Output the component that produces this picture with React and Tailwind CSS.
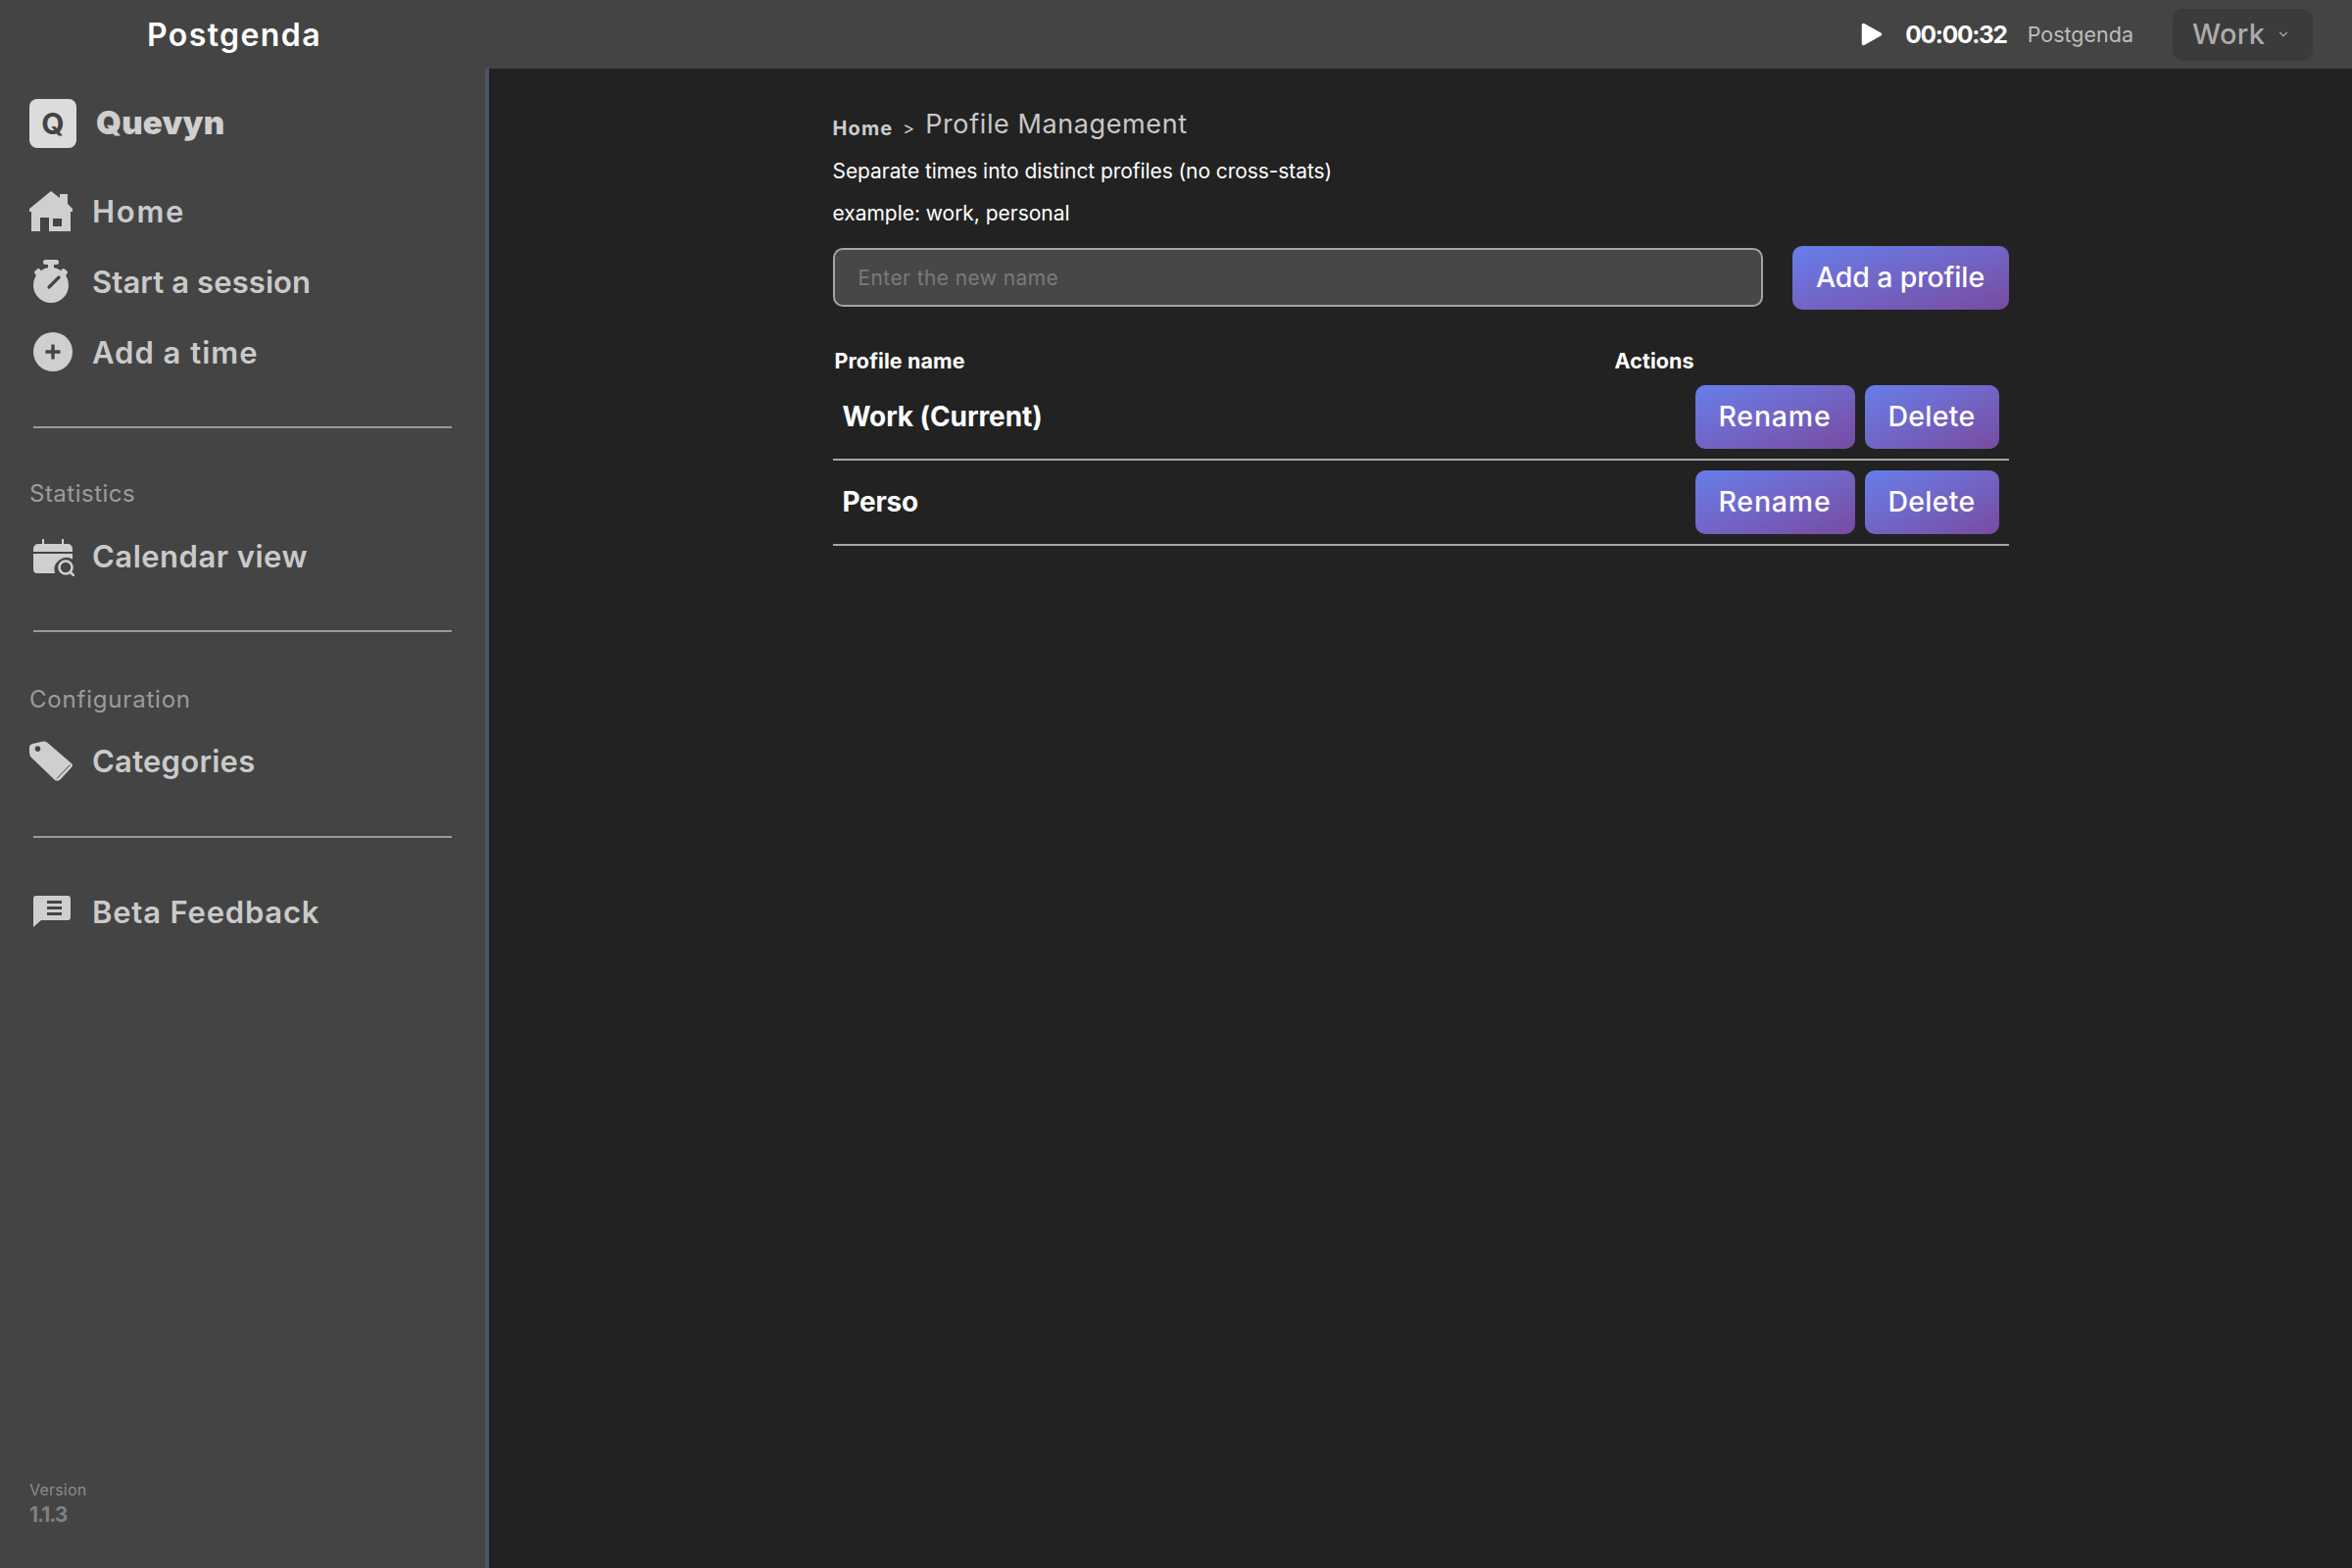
import React from "react";
import { LuChevronDown } from "react-icons/lu";

const HomeIcon = () => (
  <svg viewBox="0 0 44 41" className="w-[44px] h-[41px]" fill="#cfcfcf">
    <path fillRule="evenodd" d="M22 0l9 7V3h8v10l5 5v3h-2v20H20V27h-9v14H2V21H0v-3zM24 28v8h9v-8z" />
  </svg>
);

const StopwatchIcon = () => (
  <svg viewBox="0 0 36 44" className="w-[36px] h-[44px] ml-[4px]" fill="#cfcfcf">
    <rect x="10" y="0" width="16" height="5" rx="2.5" />
    <rect x="15" y="4" width="6" height="7" />
    <rect x="1" y="10" width="7" height="5" rx="2" transform="rotate(-40 4.5 12.5)" />
    <rect x="28" y="10" width="7" height="5" rx="2" transform="rotate(40 31.5 12.5)" />
    <circle cx="18" cy="26" r="18" />
    <path d="M16 28L26 18" stroke="#444444" strokeWidth="3.2" strokeLinecap="round" />
  </svg>
);

const PlusCircleIcon = () => (
  <svg viewBox="0 0 40 40" className="w-[40px] h-[40px] ml-[4px]">
    <circle cx="20" cy="20" r="20" fill="#cfcfcf" />
    <path d="M20 12.5v15M12.5 20h15" stroke="#444444" strokeWidth="3.4" />
  </svg>
);

const CalendarSearch = () => (
  <svg viewBox="0 0 42 38" className="w-[42px] h-[38px] ml-[4px] mt-[3px]" fill="#cfcfcf">
    <path d="M9 0h2v5h18V0h2v5h4a5 5 0 0 1 5 5v3H0v-3a5 5 0 0 1 5-5h4z" />
    <path d="M0 15h40v5.5A12.5 12.5 0 0 0 22 35H4a4 4 0 0 1-4-4z" />
    <circle cx="33" cy="29" r="6.5" fill="none" stroke="#cfcfcf" strokeWidth="2.6" />
    <path d="M37.5 33.5L42 38" stroke="#cfcfcf" strokeWidth="2.6" />
  </svg>
);

const TagIcon = () => (
  <svg viewBox="0 0 45 42" className="w-[45px] h-[42px] mt-[2px]" fill="#cfcfcf">
    <path d="M3 3L14 .5Q16 0 18 1.5L43 23Q45 25 43 27L32 39Q29 42 26 40L2 17Q0 15 0 12V6Q0 4 3 3z" />
    <circle cx="8.5" cy="8" r="2.8" fill="#444444" />
    <path d="M41.5 24.5L28 38.5" stroke="#444444" strokeWidth="1" fill="none" />
  </svg>
);

const ChatIcon = () => (
  <svg viewBox="0 0 38 32" className="w-[38px] h-[32px] ml-[4px]" fill="#cfcfcf">
    <path d="M3 0h32a3 3 0 0 1 3 3v19a3 3 0 0 1-3 3H8l-8 7V3a3 3 0 0 1 3-3z" />
    <path d="M14 5h15v3H14zM14 11h15v3H14zM14 17h15v3H14z" fill="#444444" />
  </svg>
);

const PlayIcon = () => (
  <svg viewBox="0 0 22 24" className="w-[22px] h-[24px]" fill="#ffffff" stroke="#ffffff" strokeWidth="3.5" strokeLinejoin="round">
    <path d="M2.5 2.5L19.5 12L2.5 21.5z" />
  </svg>
);

function NavItem({ icon, label, className }) {
  return (
    <div className="flex items-center h-[72px] text-[#cacaca]">
      <div className="w-[94px] pl-[30px] flex items-center shrink-0">{icon}</div>
      <span className={"text-[31px] font-semibold leading-none " + className}>{label}</span>
    </div>
  );
}

function Divider() {
  return <div className="h-[2px] bg-[#9a9a9a] ml-[34px] w-[427px]" />;
}

function GradientButton({ children, className }) {
  return (
    <button className={"h-[65px] rounded-[10px] text-white text-[28.5px] font-medium bg-gradient-to-br from-[#667eea] to-[#764ba2] " + className}>
      {children}
    </button>
  );
}

function ProfileRow({ name, className }) {
  return (
    <div className="flex items-center justify-between h-[87px] border-b-2 border-[#a5a5a5] pl-[10px] pr-[10px]">
      <span className={"text-white font-bold text-[28px] " + className}>{name}</span>
      <div className="flex gap-[10px]">
        <GradientButton className="w-[163px] tracking-[0.8px]">Rename</GradientButton>
        <GradientButton className="w-[137px] tracking-[0.3px]">Delete</GradientButton>
      </div>
    </div>
  );
}

export default function App() {
  return (
    <div className="w-[2400px] h-[1600px] flex flex-col bg-[#222222] overflow-hidden font-['Inter','Liberation_Sans',sans-serif]">
      {/* Top bar */}
      <header className="h-[70px] shrink-0 bg-[#444444] flex items-center pl-[150px] pr-[40px]">
        <span className="text-white text-[32px] font-semibold tracking-[1.4px] mt-[2px]">Postgenda</span>
        <div className="ml-auto flex items-center">
          <PlayIcon />
          <span className="ml-[23px] text-white text-[24.5px] font-bold tracking-[-1.3px]">00:00:32</span>
          <span className="ml-[21px] text-[#bdbdbd] text-[21.5px]">Postgenda</span>
          <div className="ml-[40px] w-[143px] h-[53px] rounded-[10px] bg-[#3b3b3b] flex items-center pl-[20px] text-[#ababab]">
            <span className="text-[29px] font-medium tracking-[0.3px]">Work</span>
            <LuChevronDown className="ml-[12px] w-[14px] h-[14px]" />
          </div>
        </div>
      </header>

      <div className="flex-1 flex min-h-0">
        {/* Sidebar */}
        <aside className="w-[499px] shrink-0 bg-[#444444] border-r-4 border-[#4b5563] flex flex-col">
          <div className="flex items-center pl-[30px] mt-[31px]">
            <div className="w-[48px] h-[50px] rounded-[8px] bg-[#dcdcdc] flex items-center justify-center text-[#444444] text-[30px] font-bold">Q</div>
            <span className="ml-[20px] text-[33px] font-black text-[#cfcfcf] tracking-[0.2px]">Quevyn</span>
          </div>
          <div className="mt-[28px]">
            <NavItem icon={<HomeIcon />} label="Home" className="tracking-[1.7px]" />
            <NavItem icon={<StopwatchIcon />} label="Start a session" className="tracking-[0.1px]" />
            <NavItem icon={<PlusCircleIcon />} label="Add a time" className="tracking-[1px]" />
          </div>
          <div className="mt-[40px]"><Divider /></div>
          <div className="mt-[55px] pl-[30px] text-[24px] leading-none text-[#9c9c9c] tracking-[0.5px]">Statistics</div>
          <div className="mt-[15px]">
            <NavItem icon={<CalendarSearch />} label="Calendar view" className="tracking-[0.5px]" />
          </div>
          <div className="mt-[40px]"><Divider /></div>
          <div className="mt-[57px] pl-[30px] text-[24px] leading-none text-[#9c9c9c] tracking-[0.8px]">Configuration</div>
          <div className="mt-[14px]">
            <NavItem icon={<TagIcon />} label="Categories" className="tracking-[0.25px]" />
          </div>
          <div className="mt-[41px]"><Divider /></div>
          <div className="mt-[39px]">
            <NavItem icon={<ChatIcon />} label="Beta Feedback" className="tracking-[0.8px]" />
          </div>
          <div className="mt-auto pl-[30px] pb-[40px]">
            <div className="text-[16px] text-[#8c8c8c] leading-[24px] tracking-[0.2px]">Version</div>
            <div className="text-[21px] font-bold text-[#808080] leading-[28px] tracking-[-1px]">1.1.3</div>
          </div>
        </aside>

        {/* Main content */}
        <main className="flex-1 flex justify-center">
          <div className="w-[1200px] pt-[37px]">
            <div className="flex items-center">
              <span className="mt-[7px] text-[20px] font-bold text-[#cccccc] tracking-[1.1px]">Home</span>
              <span className="ml-[10px] mt-[7px] text-[18px] text-[#cccccc]">&gt;</span>
              <span className="ml-[11px] text-[27px] text-[#c8c8c8] tracking-[0.6px]">Profile Management</span>
            </div>
            <p className="mt-[13px] text-[21px] text-white leading-[28px] tracking-[-0.07px]">Separate times into distinct profiles (no cross-stats)</p>
            <p className="mt-[15px] text-[21px] text-white leading-[28px] tracking-[-0.03px]">example: work, personal</p>
            <div className="mt-[19px] flex items-center gap-[30px]">
              <input
                placeholder="Enter the new name"
                className="w-[949px] h-[60px] rounded-[10px] border-2 border-[#a5a5a5] bg-[#474747] px-[24px] text-[21px] tracking-[0.4px] text-white placeholder:text-[#7a7a7a] outline-none"
              />
              <GradientButton className="w-[221px] tracking-[-0.15px]">Add a profile</GradientButton>
            </div>
            <div className="mt-[38px] flex text-white text-[21.5px] font-bold leading-[28px] tracking-[0.1px]">
              <span className="pl-[2px] w-[798px]">Profile name</span>
              <span>Actions</span>
            </div>
            <div className="mt-[1px]">
              <ProfileRow name="Work (Current)" className="tracking-[-0.1px]" />
              <ProfileRow name="Perso" className="tracking-[-0.3px]" />
            </div>
          </div>
        </main>
      </div>
    </div>
  );
}
